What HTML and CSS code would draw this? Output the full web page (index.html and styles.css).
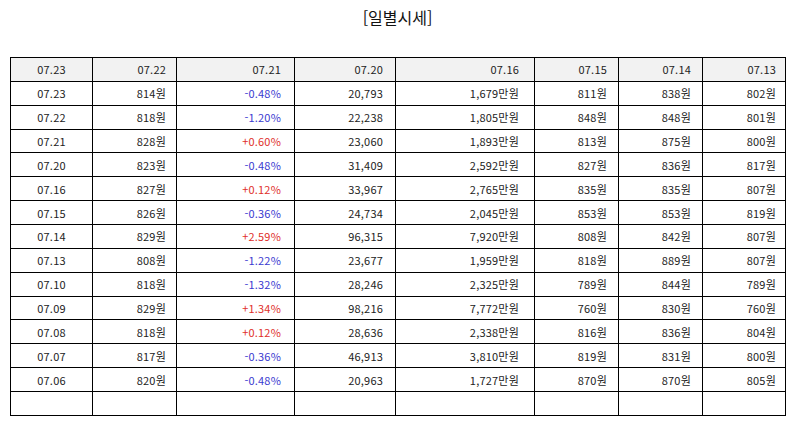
FILE: index.html
```html
<!DOCTYPE html>
<html lang="ko">
<head>
<meta charset="utf-8">
<link rel="stylesheet" href="styles.css">
</head>
<body>
<div class="page">
  <h1 class="title">[일별시세]</h1>
  <table class="grid">
    <colgroup>
      <col class="c1"><col class="c2"><col class="c3"><col class="c4"><col class="c5"><col class="c6"><col class="c7"><col class="c8">
    </colgroup>
    <thead>
      <tr><th class="ctr">07.23</th><th>07.22</th><th>07.21</th><th>07.20</th><th>07.16</th><th>07.15</th><th>07.14</th><th>07.13</th></tr>
    </thead>
    <tbody>
      <tr><td class="ctr">07.23</td><td>814원</td><td class="dn">-0.48%</td><td>20,793</td><td>1,679만원</td><td>811원</td><td>838원</td><td>802원</td></tr>
      <tr><td class="ctr">07.22</td><td>818원</td><td class="dn">-1.20%</td><td>22,238</td><td>1,805만원</td><td>848원</td><td>848원</td><td>801원</td></tr>
      <tr><td class="ctr">07.21</td><td>828원</td><td class="up">+0.60%</td><td>23,060</td><td>1,893만원</td><td>813원</td><td>875원</td><td>800원</td></tr>
      <tr><td class="ctr">07.20</td><td>823원</td><td class="dn">-0.48%</td><td>31,409</td><td>2,592만원</td><td>827원</td><td>836원</td><td>817원</td></tr>
      <tr><td class="ctr">07.16</td><td>827원</td><td class="up">+0.12%</td><td>33,967</td><td>2,765만원</td><td>835원</td><td>835원</td><td>807원</td></tr>
      <tr><td class="ctr">07.15</td><td>826원</td><td class="dn">-0.36%</td><td>24,734</td><td>2,045만원</td><td>853원</td><td>853원</td><td>819원</td></tr>
      <tr><td class="ctr">07.14</td><td>829원</td><td class="up">+2.59%</td><td>96,315</td><td>7,920만원</td><td>808원</td><td>842원</td><td>807원</td></tr>
      <tr><td class="ctr">07.13</td><td>808원</td><td class="dn">-1.22%</td><td>23,677</td><td>1,959만원</td><td>818원</td><td>889원</td><td>807원</td></tr>
      <tr><td class="ctr">07.10</td><td>818원</td><td class="dn">-1.32%</td><td>28,246</td><td>2,325만원</td><td>789원</td><td>844원</td><td>789원</td></tr>
      <tr><td class="ctr">07.09</td><td>829원</td><td class="up">+1.34%</td><td>98,216</td><td>7,772만원</td><td>760원</td><td>830원</td><td>760원</td></tr>
      <tr><td class="ctr">07.08</td><td>818원</td><td class="up">+0.12%</td><td>28,636</td><td>2,338만원</td><td>816원</td><td>836원</td><td>804원</td></tr>
      <tr><td class="ctr">07.07</td><td>817원</td><td class="dn">-0.36%</td><td>46,913</td><td>3,810만원</td><td>819원</td><td>831원</td><td>800원</td></tr>
      <tr><td class="ctr">07.06</td><td>820원</td><td class="dn">-0.48%</td><td>20,963</td><td>1,727만원</td><td>870원</td><td>870원</td><td>805원</td></tr>
      <tr><td></td><td></td><td></td><td></td><td></td><td></td><td></td><td></td></tr>
    </tbody>
  </table>
</div>
</body>
</html>
```

FILE: styles.css
```css
html, body {
  margin: 0;
  padding: 0;
  background: #fff;
}
.page {
  padding: 0 9px 0 10px;
  font-family: "Noto Sans CJK KR", "Noto Sans", sans-serif;
  color: #222;
}
.title {
  margin: 0;
  height: 57px;
  padding-top: 5px;
  box-sizing: border-box;
  text-align: center;
  font-size: 16px;
  font-weight: normal;
  line-height: 24px;
  color: #111;
}
.grid {
  width: 775px;
  table-layout: fixed;
  border-collapse: collapse;
  border: 1px solid #000;
  font-size: 11px;
  letter-spacing: 0.2px;
}
.c1 { width: 82px; }
.c2 { width: 84px; }
.c3 { width: 118px; }
.c4 { width: 101px; }
.c5 { width: 139px; }
.c6 { width: 84px; }
.c7 { width: 84px; }
.c8 { width: 83px; }
.grid th, .grid td {
  border: 1px solid #000;
  height: 22.87px;
  padding: 0 10px 0 4px;
  text-align: right;
  font-weight: normal;
  line-height: 14px;
  white-space: nowrap;
}
.grid th:nth-child(3), .grid td:nth-child(3) { padding-right: 13px; }
.grid th:nth-child(4), .grid td:nth-child(4) { padding-right: 12px; }
.grid th:nth-child(5), .grid td:nth-child(5) { padding-right: 15px; }
.grid th:nth-child(6), .grid td:nth-child(6) { padding-right: 11px; }
.grid th:nth-child(7), .grid td:nth-child(7) { padding-right: 11px; }
.grid th:nth-child(8), .grid td:nth-child(8) { padding-right: 9px; }
.grid th {
  background: #f2f2f2;
}
.grid .ctr {
  text-align: center;
  padding: 0 4px;
}
.up { color: #e0302a; }
.dn { color: #3a3ad0; }
```
